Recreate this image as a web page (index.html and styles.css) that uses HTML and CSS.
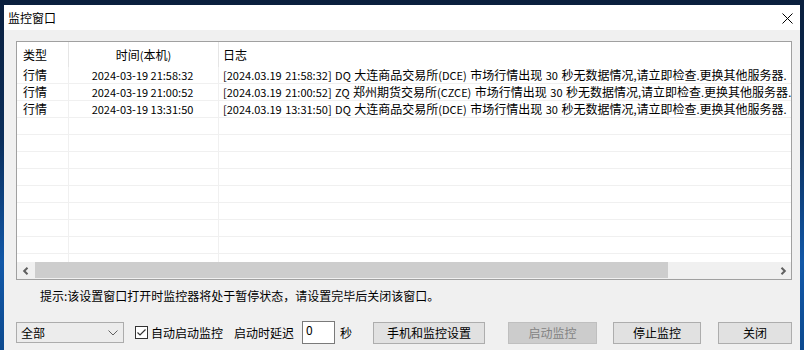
FILE: index.html
```html
<!DOCTYPE html>
<html lang="zh-CN">
<head>
<meta charset="utf-8">
<title>监控窗口</title>
<link rel="stylesheet" href="styles.css">
</head>
<body>
<div class="win">
  <div class="titlebar">
    <span class="title">监控窗口</span>
    <svg class="close" width="11" height="11" viewBox="0 0 11 11"><path d="M0.5 0.5 L10.5 10.5 M10.5 0.5 L0.5 10.5" stroke="#000" stroke-width="1" fill="none"/></svg>
  </div>
  <div class="client">
    <div class="list">
      <div class="grid">
        <div class="row head">
          <div class="c c1">类型</div><div class="c c2">时间<span class="l">(</span>本机<span class="l">)</span></div><div class="c c3">日志</div>
        </div>
        <div class="row">
          <div class="c c1">行情</div><div class="c c2 time">2024-03-19 21:58:32</div><div class="c c3"><span class="l">[2024.03.19 21:58:32] DQ </span>大连商品交易所<span class="l">(DCE) </span>市场行情出现<span class="l"> 30 </span>秒无数据情况<span class="l">,</span>请立即检查<span class="l">.</span>更换其他服务器<span class="l">.</span></div>
        </div>
        <div class="row">
          <div class="c c1">行情</div><div class="c c2 time">2024-03-19 21:00:52</div><div class="c c3"><span class="l">[2024.03.19 21:00:52] ZQ </span>郑州期货交易所<span class="l">(CZCE) </span>市场行情出现<span class="l"> 30 </span>秒无数据情况<span class="l">,</span>请立即检查<span class="l">.</span>更换其他服务器<span class="l">.</span></div>
        </div>
        <div class="row">
          <div class="c c1">行情</div><div class="c c2 time">2024-03-19 13:31:50</div><div class="c c3"><span class="l">[2024.03.19 13:31:50] DQ </span>大连商品交易所<span class="l">(DCE) </span>市场行情出现<span class="l"> 30 </span>秒无数据情况<span class="l">,</span>请立即检查<span class="l">.</span>更换其他服务器<span class="l">.</span></div>
        </div>
        <div class="row"><div class="c c1"></div><div class="c c2"></div><div class="c c3"></div></div>
        <div class="row"><div class="c c1"></div><div class="c c2"></div><div class="c c3"></div></div>
        <div class="row"><div class="c c1"></div><div class="c c2"></div><div class="c c3"></div></div>
        <div class="row"><div class="c c1"></div><div class="c c2"></div><div class="c c3"></div></div>
        <div class="row"><div class="c c1"></div><div class="c c2"></div><div class="c c3"></div></div>
        <div class="row"><div class="c c1"></div><div class="c c2"></div><div class="c c3"></div></div>
        <div class="row"><div class="c c1"></div><div class="c c2"></div><div class="c c3"></div></div>
        <div class="row"><div class="c c1"></div><div class="c c2"></div><div class="c c3"></div></div>
        <div class="row"><div class="c c1"></div><div class="c c2"></div><div class="c c3"></div></div>
      </div>
      <div class="hscroll">
        <div class="arrow">
          <svg width="8" height="8" viewBox="0 0 8 8"><path d="M5.5 0.8 L2.2 4 L5.5 7.2" stroke="#606060" stroke-width="2" fill="none"/></svg>
        </div>
        <div class="track"><div class="thumb"></div></div>
        <div class="arrow">
          <svg width="8" height="8" viewBox="0 0 8 8"><path d="M2.5 0.8 L5.8 4 L2.5 7.2" stroke="#606060" stroke-width="2" fill="none"/></svg>
        </div>
      </div>
    </div>
    <div class="hint">提示:该设置窗口打开时监控器将处于暂停状态，请设置完毕后关闭该窗口。</div>
    <div class="controls">
      <div class="combo"><span>全部</span>
        <svg width="10" height="6" viewBox="0 0 10 6"><path d="M0.5 0.5 L5 5 L9.5 0.5" stroke="#606060" stroke-width="1" fill="none"/></svg>
      </div>
      <label class="check">
        <span class="box"><svg width="11" height="11" viewBox="0 0 11 11"><path d="M1.5 5.5 L4 8 L9.5 2.5" stroke="#333" stroke-width="1.2" fill="none"/></svg></span>
        <span>自动启动监控</span>
      </label>
      <span class="delay">启动时延迟</span>
      <div class="input">0</div>
      <span class="sec">秒</span>
      <div class="btn b1">手机和监控设置</div>
      <div class="btn b2 disabled">启动监控</div>
      <div class="btn b3">停止监控</div>
      <div class="btn b4">关闭</div>
    </div>
  </div>
</div>
</body>
</html>
```

FILE: styles.css
```css
* { box-sizing: border-box; }
html, body { margin: 0; padding: 0; }
body {
  width: 804px;
  height: 350px;
  overflow: hidden;
  background: linear-gradient(180deg, #0a1f3d 0%, #0b2f5c 40%, #1258a8 75%, #0d4a8f 100%);
  font-family: "Noto Sans CJK SC", sans-serif;
  font-size: 12px;
  color: #000;
}
.win {
  margin: 5px 0 0 4px;
  width: 796px;
  height: 360px;
  background: #f0f0f0;
  display: flex;
  flex-direction: column;
}
.titlebar {
  height: 25px;
  background: #fff;
  display: flex;
  align-items: center;
  justify-content: space-between;
  padding: 0 7px 0 4px;
}
.title { line-height: 14px; }
.close { display: block; margin-top: 1px; }
.client {
  padding: 11px 0 0 12px;
  display: flex;
  flex-direction: column;
}
.list {
  width: 776px;
  height: 239px;
  border: 1px solid #a0a0a0;
  background: #fff;
  display: flex;
  flex-direction: column;
}
.grid {
  height: 220px;
  overflow: hidden;
}
.row {
  display: flex;
  height: 17px;
  border-bottom: 1px solid #f0f0f0;
}
.row.head {
  height: 25px;
  border-bottom: none;
}
.c {
  height: 100%;
  white-space: nowrap;
  overflow: hidden;
  line-height: 16px;
}
.row.head .c { line-height: 25px; border-right-color: #e5e5e5; }
.c1 { width: 52px; padding-left: 6px; border-right: 1px solid #f0f0f0; }
.c2 { width: 150px; text-align: center; border-right: 1px solid #f0f0f0; }
.c3 { flex: 1; padding-left: 4px; border-right: none !important; }
.time { font-size: 11px; padding-right: 2px; }
.l { font-size: 11px; word-spacing: 1px; }
.hscroll {
  height: 17px;
  display: flex;
  background: #f0f0f0;
}
.arrow {
  width: 17px;
  display: flex;
  align-items: center;
  justify-content: center;
}
.track {
  flex: 1;
  padding: 0 0 1px 1px;
  display: flex;
}
.thumb {
  width: 633px;
  background: #cdcdcd;
}
.hint {
  margin: 9px 0 0 24px;
  line-height: 14px;
}
.controls {
  margin-top: 18px;
  display: flex;
  align-items: center;
  height: 23px;
}
.combo {
  width: 108px;
  height: 21px;
  border: 1px solid #acacac;
  background: #ececec;
  display: flex;
  align-items: center;
  justify-content: space-between;
  padding: 0 5px 0 4px;
  line-height: 14px;
}
.check {
  margin-left: 11px;
  display: flex;
  align-items: center;
  gap: 3px;
}
.box {
  width: 13px;
  height: 13px;
  border: 1px solid #333;
  background: #fff;
  display: flex;
  align-items: center;
  justify-content: center;
}
.box svg { display: block; }
.delay { margin-left: 11px; }
.input {
  margin-left: 8px;
  width: 33px;
  height: 23px;
  border: 1px solid #7a7a7a;
  background: #fff;
  padding: 1px 0 0 3px;
  line-height: 14px;
}
.sec { margin-left: 5px; }
.btn {
  height: 22px;
  border: 1px solid #adadad;
  background: #e1e1e1;
  display: flex;
  align-items: center;
  justify-content: center;
  line-height: 14px;
}
.b1 { margin-left: 21px; width: 112px; }
.b2 { margin-left: 23px; width: 89px; }
.b3 { margin-left: 16px; width: 88px; }
.b4 { margin-left: 17px; width: 74px; }
.btn.disabled {
  background: #cccccc;
  border-color: #bfbfbf;
  color: #838383;
}
```
